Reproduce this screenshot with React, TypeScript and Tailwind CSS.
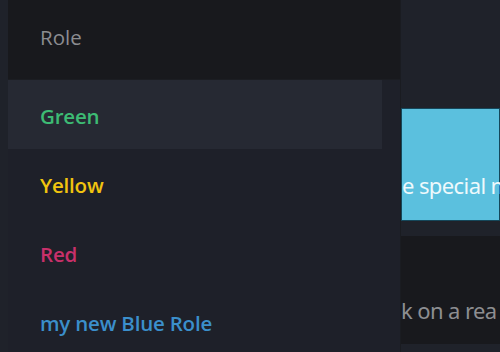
const roles = [
  { name: "Green", color: "text-[#3dbb74]", active: true },
  { name: "Yellow", color: "text-[#f1c40f]", active: false },
  { name: "Red", color: "text-[#c8306a]", active: false },
  { name: "my new Blue Role", color: "text-[#3b8fcb]", active: false },
];

export default function App() {
  return (
    <div className="relative flex h-[352px] w-[500px] overflow-hidden bg-[#1f222a] font-['Open_Sans',sans-serif]">
      <div className="w-[8px] shrink-0" />

      {/* role dropdown */}
      <div className="flex w-[392px] shrink-0 flex-col bg-[#1e2029]">
        <div className="flex h-[80px] shrink-0 items-center border-b border-[#1b1d22] bg-[#18191d] pb-[4px] pl-[32px] text-[20.5px] text-[#8b8c90]">
          Role
        </div>
        <ul className="flex flex-col pr-[18px]">
          {roles.map((r) => (
            <li
              key={r.name}
              className={`flex h-[69px] shrink-0 items-center pl-[32px] pt-[3px] text-[20.5px] font-semibold tracking-[-0.2px] ${r.color} ${
                r.active ? "bg-[#262933]" : ""
              }`}
            >
              {r.name}
            </li>
          ))}
        </ul>
      </div>

      {/* page content behind */}
      <div className="flex min-w-0 flex-1 flex-col overflow-hidden border-l border-[#1a1c21] font-['Noto_Sans',sans-serif] whitespace-nowrap">
        <div className="h-[108px] shrink-0" />
        <div className="flex h-[113px] shrink-0 items-end border border-[#15475a] bg-[#5bc0de] pb-[18px] text-[22px] tracking-[-0.6px] text-[#eef9fc]">
          e special m
        </div>
        <div className="h-[15px] shrink-0" />
        <div className="flex h-[108px] shrink-0 items-end bg-[#18191d] pb-[17px] text-[22px] tracking-[-0.6px] text-[#8d8e91]">
          k on a rea
        </div>
      </div>
    </div>
  );
}
